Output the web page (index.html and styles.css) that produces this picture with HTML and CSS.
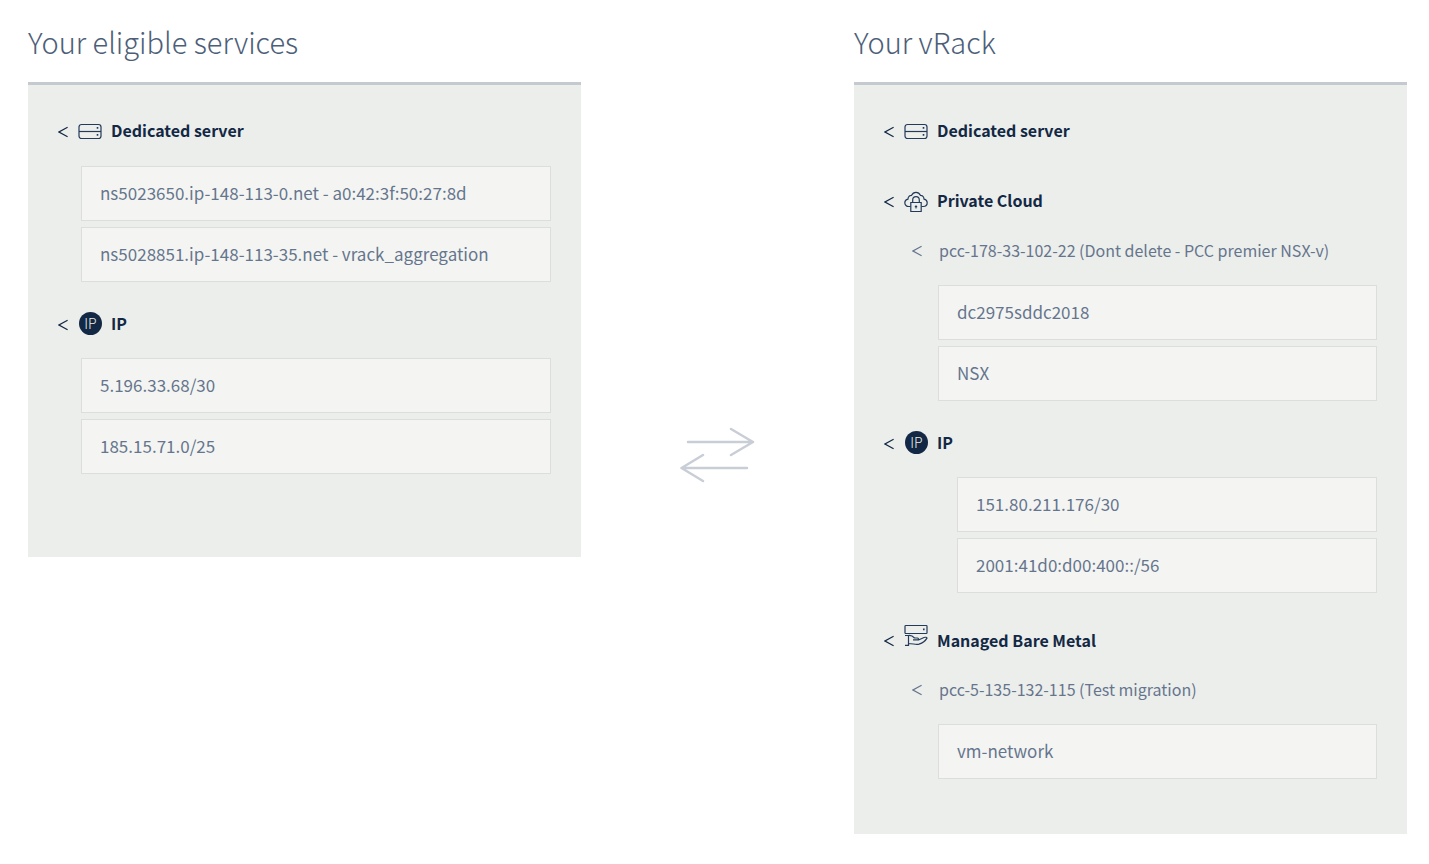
FILE: index.html
```html
<!DOCTYPE html>
<html lang="en">
<head>
<meta charset="utf-8">
<title>vRack</title>
<link rel="stylesheet" href="styles.css">
</head>
<body>
<svg class="sprite" aria-hidden="true">
  <symbol id="chevron" viewBox="0 0 10 24">
    <path d="M9.600 8.300L1 13L9.600 17.700"/>
  </symbol>
  <symbol id="server" viewBox="0 0 24 24">
    <rect x="1" y="5.500" width="22" height="14" rx="2.5"/>
    <path d="M1 12.500H23"/>
    <path class="dot" d="M18.700 8h1.600v1.800h-1.600zM18.700 15h1.600v1.800h-1.600z"/>
  </symbol>
  <symbol id="cloud" viewBox="0 0 24 24">
    <path d="M6.500 17.500H4.800C2.500 17.500.8 16 .8 13.800c0-2 1.400-3.300 3.200-3.700C4 7.800 5.500 6.200 7.600 6.300 8.500 4.200 10 3.300 12 3.300s3.500.9 4.400 3c2.100-.1 3.600 1.500 3.600 3.800 1.800.4 3.200 1.700 3.200 3.700 0 2.200-1.700 3.700-4 3.700H17.500"/>
    <path d="M6.800 13.500h10.400v9H6.800zM8.700 13.500v-2.500a3.300 3.300 0 0 1 6.600 0V13.500"/>
    <path class="dot" d="M11.500 16.300h1v3.200h-1zM10.800 17.100h2.400v1.200h-2.400z"/>
  </symbol>
  <symbol id="metal" viewBox="0 0 24 24">
    <rect x="1" y="2.500" width="22" height="8" rx=".8"/>
    <path class="dot" d="M19 5.500h1.600v1.800H19z"/>
    <path d="M1 12.500h3.500v9.800H1M4.500 12.500c3-.3 4.500.8 6 2.500h3c1.300 0 1.300 1.900 0 1.900H9M14.500 17l5.500-2.500c1.500-.5 3-.3 3 .6-1.500 2.600-5 5-8 6-3 .9-6-.6-10.500-.6"/>
  </symbol>
  <symbol id="arrows" viewBox="0 0 76 58">
    <path d="M8 16H73M51 3L73 16L51 29M67 42H3M23 29L1.500 42L23 55"/>
  </symbol>
</svg>
<main class="vrack">
  <section class="column">
    <h1 class="title">Your eligible services</h1>
    <div class="panel panel-eligible">
      <section class="group">
        <h2 class="heading"><button class="toggle" aria-label="Toggle Dedicated server"><svg class="chevron"><use href="#chevron"/></svg></button><svg class="icon"><use href="#server"/></svg><span>Dedicated server</span></h2>
        <ul class="items">
          <li><button class="item">ns5023650.ip-148-113-0.net - a0:42:3f:50:27:8d</button></li>
          <li><button class="item">ns5028851.ip-148-113-35.net - vrack_aggregation</button></li>
        </ul>
      </section>
      <section class="group">
        <h2 class="heading"><button class="toggle" aria-label="Toggle IP"><svg class="chevron"><use href="#chevron"/></svg></button><span class="ip-badge">IP</span><span>IP</span></h2>
        <ul class="items">
          <li><button class="item">5.196.33.68/30</button></li>
          <li><button class="item">185.15.71.0/25</button></li>
        </ul>
      </section>
    </div>
  </section>
  <div class="transfer"><svg class="arrows"><use href="#arrows"/></svg></div>
  <section class="column">
    <h1 class="title">Your vRack</h1>
    <div class="panel">
      <section class="group group-empty">
        <h2 class="heading"><button class="toggle" aria-label="Toggle Dedicated server in vRack"><svg class="chevron"><use href="#chevron"/></svg></button><svg class="icon"><use href="#server"/></svg><span>Dedicated server</span></h2>
      </section>
      <section class="group">
        <h2 class="heading"><button class="toggle" aria-label="Toggle Private Cloud"><svg class="chevron"><use href="#chevron"/></svg></button><svg class="icon"><use href="#cloud"/></svg><span>Private Cloud</span></h2>
        <h3 class="subheading"><button class="toggle" aria-label="Toggle pcc-178-33-102-22"><svg class="chevron"><use href="#chevron"/></svg></button><span>pcc-178-33-102-22 (Dont delete - PCC premier NSX-v)</span></h3>
        <ul class="items items-nested">
          <li><button class="item">dc2975sddc2018</button></li>
          <li><button class="item">NSX</button></li>
        </ul>
      </section>
      <section class="group">
        <h2 class="heading"><button class="toggle" aria-label="Toggle IP in vRack"><svg class="chevron"><use href="#chevron"/></svg></button><span class="ip-badge">IP</span><span>IP</span></h2>
        <ul class="items items-deep">
          <li><button class="item">151.80.211.176/30</button></li>
          <li><button class="item">2001:41d0:d00:400::/56</button></li>
        </ul>
      </section>
      <section class="group">
        <h2 class="heading heading-tall"><button class="toggle" aria-label="Toggle Managed Bare Metal"><svg class="chevron"><use href="#chevron"/></svg></button><svg class="icon"><use href="#metal"/></svg><span>Managed Bare Metal</span></h2>
        <h3 class="subheading"><button class="toggle" aria-label="Toggle pcc-5-135-132-115"><svg class="chevron"><use href="#chevron"/></svg></button><span>pcc-5-135-132-115 (Test migration)</span></h3>
        <ul class="items items-nested">
          <li><button class="item">vm-network</button></li>
        </ul>
      </section>
    </div>
  </section>
</main>
</body>
</html>
```

FILE: styles.css
```css
* { box-sizing: border-box; }
body {
  margin: 0;
  background: #fff;
  color: #122844;
  font-family: "Noto Sans CJK SC", "Noto Sans", sans-serif;
}
button { font: inherit; color: inherit; border: 0; background: none; padding: 0; cursor: pointer; }
h1, h2, h3, ul { margin: 0; padding: 0; }
ul { list-style: none; }
.sprite { position: absolute; width: 0; height: 0; }
.vrack {
  display: grid;
  grid-template-columns: 1fr 273px 1fr;
  align-items: start;
  padding: 22px 22px 30px 28px;
}
.title {
  margin-bottom: 22px;
  color: #4d5e78;
  font-size: 29px;
  font-weight: 300;
  line-height: 38px;
}
.panel {
  display: flex;
  flex-direction: column;
  gap: 30px;
  padding: 34px 30px 55px;
  border-top: 3px solid #c4cad0;
  background: #eceeeb;
}
.panel-eligible { padding-bottom: 83px; }
.group-empty { padding-bottom: 16px; }
.heading {
  display: flex;
  align-items: flex-start;
  height: 24px;
  font-size: 16px;
  font-weight: 700;
  line-height: 22px;
}
.heading-tall { align-items: flex-end; height: 29px; line-height: 24px; }
.heading-tall .icon { align-self: flex-start; }
.toggle { width: 10px; height: 24px; }
.chevron {
  display: block;
  width: 10px;
  height: 24px;
  fill: none;
  stroke: currentColor;
  stroke-width: 1.2;
}
.icon { flex: none; width: 24px; height: 24px; margin: 0 9px 0 10px; }
.icon { fill: none; stroke: #233a5a; stroke-width: 1.2; }
.dot { fill: #233a5a; stroke: none; }
.ip-badge {
  flex: none;
  width: 23px;
  height: 23px;
  margin: 0 9px 0 11px;
  border-radius: 50%;
  background: #122844;
  color: #eceeeb;
  font-size: 14px;
  font-weight: 300;
  line-height: 22px;
  text-align: center;
}
.subheading {
  display: flex;
  gap: 17px;
  margin: 25px 0 0 28px;
  color: #66758e;
  font-size: 16px;
  font-weight: 400;
  line-height: 24px;
}
.items { display: grid; gap: 6px; margin: 22px 0 0 23px; }
.panel-eligible .group:first-child .items { margin-top: 23px; }
.items-nested { margin: 23px 0 0 54px; }
.items-deep { margin-left: 73px; }
.item {
  display: block;
  width: 100%;
  padding: 13px 18px 15px;
  border: 1px solid #dcdedc;
  background: #f4f5f2;
  color: #66758e;
  font-size: 17px;
  line-height: 25px;
  text-align: left;
}
.transfer { align-self: start; display: flex; justify-content: center; padding-top: 404px; }
.arrows {
  width: 76px;
  height: 58px;
  fill: none;
  stroke: #c9ced6;
  stroke-width: 2.5;
  stroke-linecap: round;
  stroke-linejoin: round;
}
```
